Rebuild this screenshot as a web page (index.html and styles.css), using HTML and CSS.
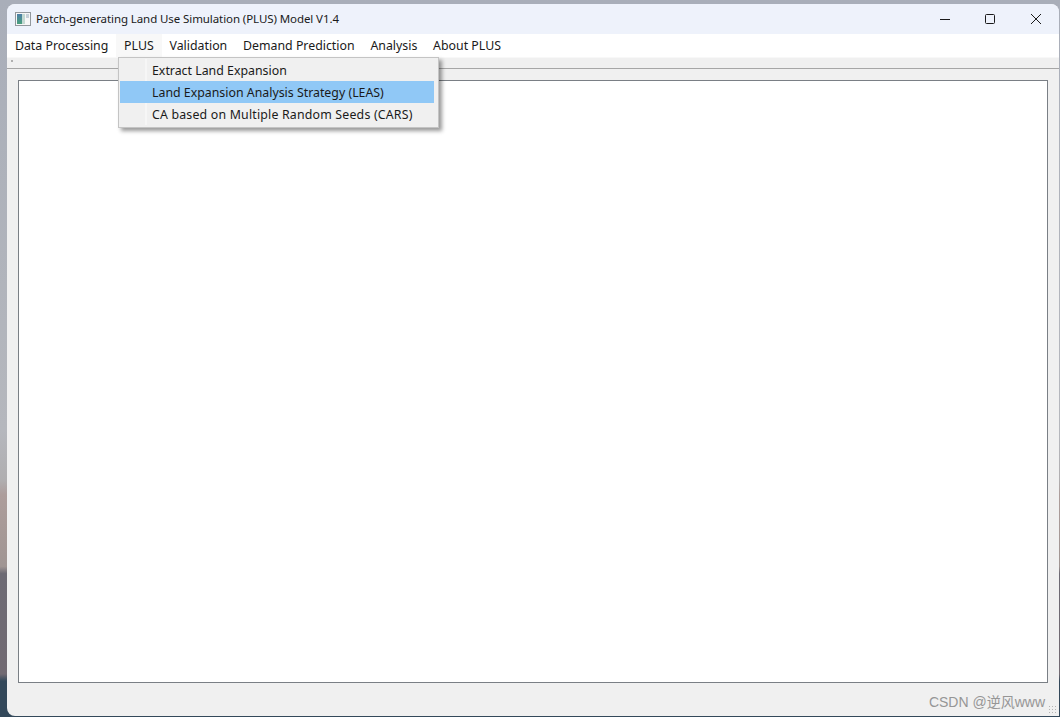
FILE: index.html
```html
<!DOCTYPE html>
<html lang="en">
<head>
<meta charset="utf-8">
<title>PLUS Model</title>
<link rel="stylesheet" href="styles.css">
</head>
<body>
<div class="window">
  <header class="titlebar">
    <svg class="appicon" width="16" height="14" viewBox="0 0 16 14">
      <defs><linearGradient id="ig" x1="0" y1="0" x2="0" y2="1"><stop offset="0" stop-color="#4d7fa8"/><stop offset="1" stop-color="#4aa07c"/></linearGradient></defs>
      <rect x="0.5" y="0.5" width="15" height="13" fill="#f7f7f7" stroke="#92989d"/>
      <rect x="2" y="2" width="5" height="10" fill="url(#ig)"/>
      <rect x="7" y="2" width="3" height="10" fill="#c4d9d2"/>
      <rect x="11" y="2" width="3" height="4" fill="#c6d0d8"/>
    </svg>
    <span class="title">Patch-generating Land Use Simulation (PLUS) Model V1.4</span>
    <div class="controls">
      <button class="ctl ctl-min"><svg width="12" height="12" viewBox="0 0 12 12"><path d="M1 6.5h10" stroke="#1a1a1a" stroke-width="1"/></svg></button>
      <button class="ctl"><svg width="12" height="12" viewBox="0 0 12 12"><rect x="1.5" y="1.5" width="9" height="9" rx="1" fill="none" stroke="#1a1a1a"/></svg></button>
      <button class="ctl"><svg width="12" height="12" viewBox="0 0 12 12"><path d="M1 1l10 10M11 1L1 11" stroke="#1a1a1a" stroke-width="1"/></svg></button>
    </div>
  </header>
  <nav class="menubar">
    <span class="mi">Data Processing</span>
    <span class="mi open">PLUS</span>
    <span class="mi">Validation</span>
    <span class="mi">Demand Prediction</span>
    <span class="mi">Analysis</span>
    <span class="mi">About PLUS</span>
  </nav>
  <div class="toolbar"><span class="grip"></span></div>
  <main class="content"><div class="frame"></div></main>
  <footer class="status"><span class="grab"></span></footer>
  <div class="dropdown">
    <div class="di">Extract Land Expansion</div>
    <div class="di hot">Land Expansion Analysis Strategy (LEAS)</div>
    <div class="di wide">CA based on Multiple Random Seeds (CARS)</div>
  </div>
</div>
<div class="watermark">CSDN @逆风www</div>
</body>
</html>
```
FILE: styles.css
```css
* { box-sizing: border-box; }
html, body { margin: 0; height: 100%; }
body {
  width: 1060px; height: 717px; overflow: hidden;
  padding: 4px 1px 1px 7px;
  font-family: "Noto Sans", "Noto Sans CJK SC", sans-serif;
  font-size: 12px; color: #1a1a1a;
  background: linear-gradient(180deg, #a9aeb9 0, #b5b7bd 60%, #b0aeb0 67%, #ad9d9b 69%, #a09593 79%, #6d6a74 80%, #726a72 94%, #33485a 95%, #33485a 100%);
}
.window {
  position: relative; height: 100%; display: flex; flex-direction: column;
  background: #f0f0f0; border-radius: 8px 8px 0 8px; overflow: visible;
}
.titlebar {
  height: 30px; display: flex; align-items: center; padding-left: 8px;
  background: #eef2fb; border-radius: 8px 8px 0 0;
}
.appicon { flex: none; }
.title { margin: 0 0 2px 5px; color: #1a1a1a; font-size: 11.5px; letter-spacing: -.087px; }
.controls { margin-left: auto; display: flex; }
.ctl {
  width: 46px; height: 30px; padding: 0; border: 0; background: none;
  display: flex; align-items: center; justify-content: center;
}
.ctl-min { width: 45px; }
.menubar {
  height: 23px; display: flex; align-items: center;
  background: #fff; font-size: 12.35px;
}
.mi { line-height: 23px; padding: 0 7.9px; }
.open { background: #f8f8f8; }
.toolbar {
  height: 12px; background: #f0f0f0; border-top: 1px solid #f8f8f8; border-bottom: 1px solid #a6a6a6;
  padding: 2px 0 0 4px;
}
.grip { display: block; width: 2px; height: 2px; background: #b0b0b0; }
.content { flex: 1; padding: 11px 11px 0 11px; }
.frame { height: 603px; background: #fff; border: 1px solid #7a7f85; }
.status { height: 33px; position: relative; }
.grab {
  position: absolute; right: 1px; bottom: 1px; width: 10px; height: 10px;
  background: radial-gradient(circle, #b4b4b4 1px, transparent 1px) 0 0 / 3px 3px;
}
.dropdown {
  position: absolute; left: 111px; top: 53px; width: 321px;
  padding: 1px 2px 2px 1px; background: #f0f0f0; border: 1px solid #c4c4c4;
  box-shadow: 3px 3px 4px rgba(0,0,0,.4);
  font-size: 12.35px;
}
.di {
  height: 22px; line-height: 22px; padding: 1px 0 0 32px; margin-right: 2px;
  background: linear-gradient(90deg, transparent 25px, #f6f6f6 25px, #f6f6f6 27px, transparent 27px);
}
.hot { background: #90c8f6; }
.wide { letter-spacing: .19px; }
.watermark {
  position: absolute; right: 15px; top: 691px;
  font-family: "Liberation Sans", "Noto Sans CJK SC", sans-serif; font-size: 14px; color: #969696;
}
```
